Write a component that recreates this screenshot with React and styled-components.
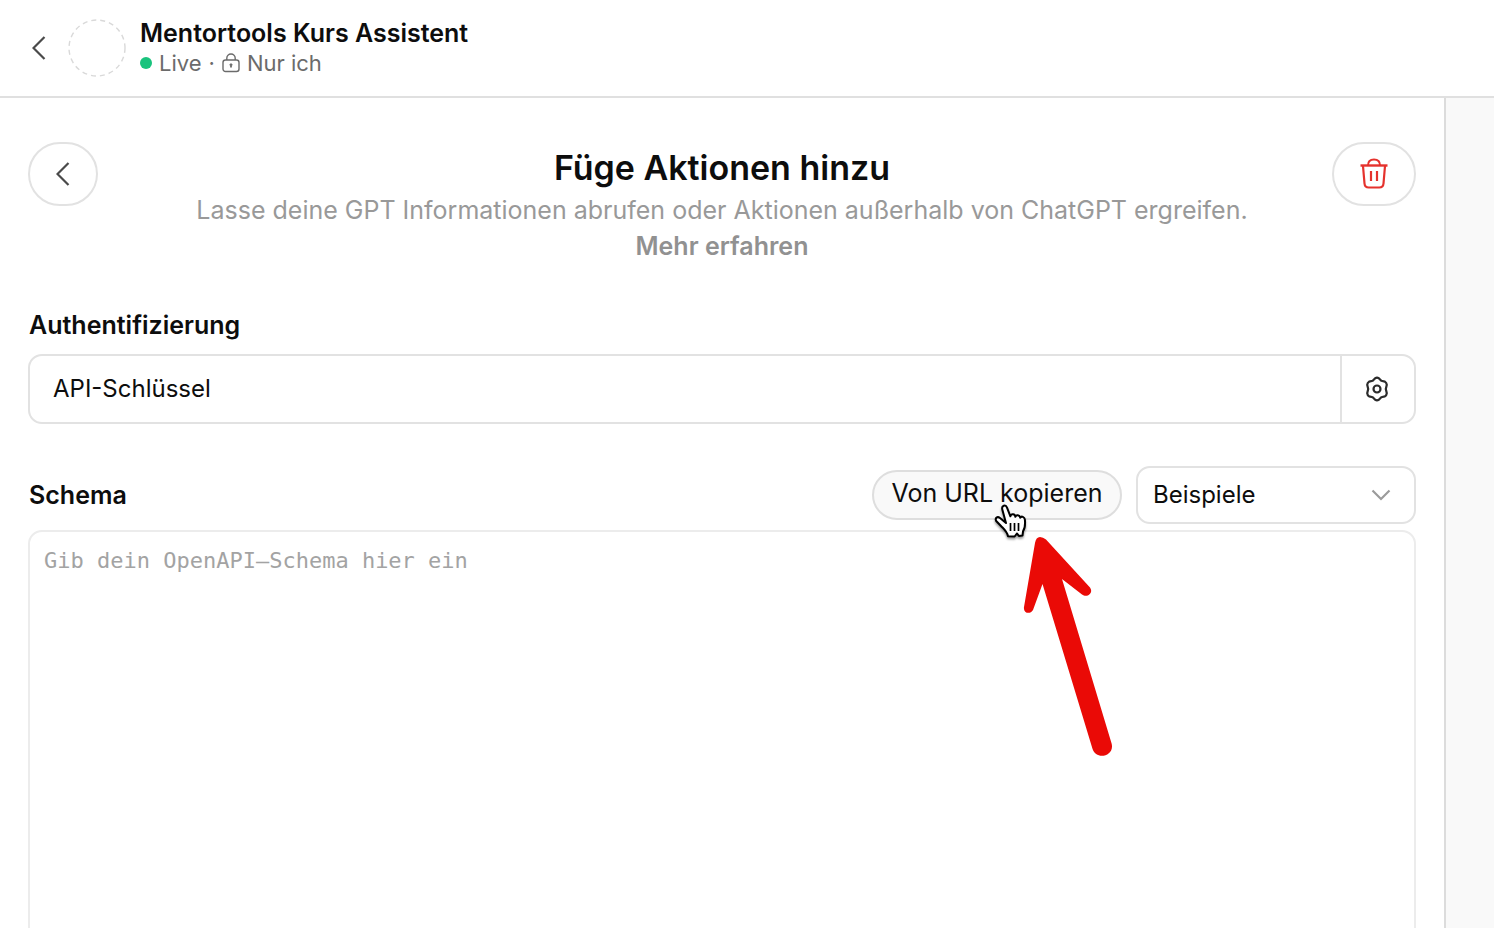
import React from 'react'
import styled, { createGlobalStyle } from 'styled-components'

const GlobalStyle = createGlobalStyle`
  * {
    box-sizing: border-box;
  }

  body {
    margin: 0;
    background: white;
    color: #0d0d0d;
    font-family: Inter, 'Liberation Sans', sans-serif;
    font-size: 24px;
    line-height: 36px;
  }

  button,
  input,
  select,
  textarea {
    margin: 0;
    color: inherit;
    font: inherit;
  }
`

const ChevronLeft = () => (
  <svg width="14" height="24" viewBox="0 0 14 24" fill="none">
    <path d="M12.5 1L1.5 12L12.5 23" stroke="#4a4a4a" strokeWidth="2.2" />
  </svg>
)

const Lock = () => (
  <svg width="18" height="20" viewBox="0 0 18 20" fill="none" stroke="#6b6b6b">
    <rect x="1" y="7" width="16" height="11.5" rx="2.5" strokeWidth="1.4" />
    <path d="M4.8 7V5.2a4.2 4.2 0 0 1 8.4 0V7" strokeWidth="1.4" />
    <path d="M9 10.5v4" strokeWidth="1.8" />
    <path d="M7.4 11.8h3.2" strokeWidth="1" />
  </svg>
)

const Trash = () => (
  <svg width="28" height="32" viewBox="0 0 28 32" fill="none" stroke="#e5322d">
    <path d="M0.5 7.5h27" strokeWidth="2.4" />
    <path d="M8 7.5C8 3.5 10.5 1.5 14 1.5S20 3.5 20 7.5" strokeWidth="2" />
    <path
      d="M3 8l1.5 17.5c.2 2.6 1.6 4 4.2 4h10.6c2.6 0 4-1.4 4.2-4L25 8"
      strokeWidth="2.2"
    />
    <path d="M11 13v10M17 13v10" strokeWidth="2.2" />
  </svg>
)

const Gear = () => (
  <svg width="26" height="26" viewBox="0 0 26 26" fill="none" stroke="#2b2b2b">
    <path
      d="M11.2 2.2Q13 1.200 14.800 2.200L17.300 4.800L20.900 5.600Q22.600 6.600 22.800 8.800L21.800 13L22.800 17.200Q22.600 19.400 20.900 20.400L17.300 21.200L14.800 23.800Q13 24.800 11.200 23.800L8.700 21.200L5.100 20.400Q3.400 19.400 3.200 17.200L4.200 13L3.200 8.800Q3.400 6.600 5.100 5.600L8.700 4.800Z"
      strokeWidth="2.2"
      strokeLinejoin="round"
    />
    <circle cx="13" cy="13" r="3.5" strokeWidth="2.2" />
  </svg>
)

const ChevronDown = () => (
  <svg width="20" height="12" viewBox="0 0 20 12" fill="none">
    <path d="M1.5 1.5L10 10l8.5-8.5" stroke="#9b9b9b" strokeWidth="2.2" />
  </svg>
)

const HandCursor = () => (
  <svg width="34" height="38" viewBox="0 0 34 38">
    <path
      d="M12 21L8.3 7.5C7.3 3.6 11.6 2 13 5.7l3.4 8.6c.7-3 4.6-2.6 5 .5.7-2.4 4.3-2 4.8.9 1.2-2 4.4-1 4.7 2 .4 4.5.4 8.3-1.8 11.3l-.6 4.5-3.6.4-2-2.4-2.3 3-6.600-.3c-1-4.8-4.2-7.2-7-10.2L2.2 19c-1.5-3 1.2-5 3.8-3z"
      fill="white"
      stroke="black"
      strokeWidth="2"
      strokeLinejoin="round"
    />
    <path d="M16.5 21v8M20.5 21v8M24.5 21v8" stroke="black" strokeWidth="1.7" />
  </svg>
)

const Arrow = () => (
  <svg width="96" height="226" viewBox="1020 534 96 226">
    <path
      d="M1035 543Q1036 537 1040 537Q1043 537 1046 539.5L1090 587.5C1094 593 1087 598.5 1082 594.5L1062 579L1111.6 743.5C1115 756 1096 761 1092.4 748.5L1042.5 584L1033 610C1030 615 1023 613 1024 607Z"
      fill="#ea0a06"
    />
  </svg>
)

const App = () => (
  <Page>
    <GlobalStyle />
    <Header>
      <BackButton aria-label="Zurück">
        <ChevronLeft />
      </BackButton>
      <Avatar viewBox="0 0 58 58">
        <circle cx="29" cy="29" r="28" />
      </Avatar>
      <div>
        <Name>Mentortools Kurs Assistent</Name>
        <Status>
          <Dot />
          <span>Live</span>
          <span>·</span>
          <Lock />
          <span>Nur ich</span>
        </Status>
      </div>
    </Header>
    <Body>
      <Panel>
        <Intro>
          <PillButton $width={70} aria-label="Zurück">
            <ChevronLeft />
          </PillButton>
          <IntroText>
            <Title>Füge Aktionen hinzu</Title>
            <Description>
              Lasse deine GPT Informationen abrufen oder Aktionen außerhalb von
              ChatGPT ergreifen.
            </Description>
            <More href="#mehr">Mehr erfahren</More>
          </IntroText>
          <PillButton $width={84} aria-label="Löschen">
            <Trash />
          </PillButton>
        </Intro>

        <Label htmlFor="auth">Authentifizierung</Label>
        <AuthField>
          <AuthInput id="auth" defaultValue="API-Schlüssel" readOnly />
          <GearButton aria-label="Einstellungen">
            <Gear />
          </GearButton>
        </AuthField>

        <SchemaBar>
          <Label htmlFor="schema">Schema</Label>
          <Tools>
            <CopyWrap>
              <CopyButton>Von URL kopieren</CopyButton>
              <CursorLayer>
                <HandCursor />
              </CursorLayer>
              <ArrowLayer>
                <Arrow />
              </ArrowLayer>
            </CopyWrap>
            <SelectWrap>
              <Select aria-label="Beispiele">
                <option>Beispiele</option>
              </Select>
              <SelectIcon>
                <ChevronDown />
              </SelectIcon>
            </SelectWrap>
          </Tools>
        </SchemaBar>
        <SchemaInput id="schema" placeholder="Gib dein OpenAPI–Schema hier ein" />
      </Panel>
      <Preview />
    </Body>
  </Page>
)

const Page = styled.div`
  display: flex;
  flex-direction: column;
  height: 100vh;
  overflow: hidden;
`

const Header = styled.header`
  display: flex;
  flex: none;
  align-items: center;
  padding: 18px 28px;
  border-bottom: 2px solid #e0e0e0;
`

const BackButton = styled.button`
  display: flex;
  padding: 4px;
  border: 0;
  background: none;
`

const Avatar = styled.svg`
  width: 58px;
  height: 58px;
  margin: 0 14px 0 18px;
  fill: none;
  stroke: #d9d9d9;
  stroke-width: 1.4;
  stroke-dasharray: 5 4;
`

const Name = styled.h1`
  margin: 0;
  font-size: 25px;
  font-weight: 600;
  line-height: 30px;
`

const Status = styled.div`
  display: flex;
  align-items: center;
  gap: 7px;
  color: #6b6b6b;
  font-size: 22px;
  line-height: 30px;
`

const Dot = styled.i`
  width: 12px;
  height: 12px;
  border-radius: 50%;
  background: #19c37d;
`

const Body = styled.div`
  display: flex;
  flex: 1;
  min-height: 0;
`

const Panel = styled.main`
  flex: 1;
  min-width: 0;
  padding: 44px 28px 0;
  overflow: hidden;
`

const Preview = styled.aside`
  flex: none;
  width: 50px;
  border-left: 2px solid #dcdcdc;
  background: #f9f9f9;
`

const Intro = styled.div`
  display: grid;
  grid-template-columns: 84px 1fr 84px;
  align-items: start;
  margin-bottom: 43px;
`

const PillButton = styled.button`
  display: flex;
  align-items: center;
  justify-content: center;
  width: ${props => props.$width}px;
  height: 64px;
  padding: 0;
  border: 2px solid #e2e2e2;
  border-radius: 32px;
  background: white;
`

const IntroText = styled.div`
  padding-top: 4px;
  font-size: 25px;
  text-align: center;
`

const Title = styled.h2`
  margin: 0 0 2px;
  font-size: 34px;
  font-weight: 600;
  line-height: 44px;
`

const Description = styled.p`
  margin: 0;
  color: #999;
`

const More = styled.a`
  display: block;
  color: #919191;
  font-weight: 600;
  text-decoration: none;
`

const Label = styled.label`
  padding-left: 1px;
  font-size: 25px;
  font-weight: 600;
`

const AuthField = styled.div`
  display: flex;
  height: 70px;
  margin: 10px 0 42px;
  overflow: hidden;
  border: 2px solid #e2e2e2;
  border-radius: 14px;
`

const AuthInput = styled.input`
  flex: 1;
  min-width: 0;
  padding: 0 23px;
  border: 0;
  background: none;
  outline: none;
`

const GearButton = styled.button`
  display: flex;
  align-items: center;
  justify-content: center;
  width: 74px;
  padding: 0 2px 0 0;
  border: 0;
  border-left: 2px solid #e2e2e2;
  background: none;
`

const SchemaBar = styled.div`
  display: flex;
  align-items: center;
  justify-content: space-between;
  margin-bottom: 6px;
`

const Tools = styled.div`
  display: flex;
  align-items: center;
  gap: 14px;
`

const CopyWrap = styled.div`
  position: relative;
`

const CopyButton = styled.button`
  display: block;
  width: 250px;
  height: 50px;
  padding: 0 0 4px;
  border: 2px solid #dedede;
  border-radius: 25px;
  background: #f9f9f9;
  font-size: 25px;
`

const CursorLayer = styled.div`
  position: absolute;
  top: 32px;
  left: 122px;
  z-index: 1;
  line-height: 0;
  pointer-events: none;
  filter: drop-shadow(0 2px 1px rgba(0, 0, 0, 0.4));
`

const ArrowLayer = styled.div`
  position: absolute;
  top: 64px;
  left: 148px;
  z-index: 1;
  line-height: 0;
  pointer-events: none;
`

const SelectWrap = styled.div`
  position: relative;
`

const Select = styled.select`
  display: block;
  width: 280px;
  height: 58px;
  padding: 0 15px;
  appearance: none;
  border: 2px solid #e2e2e2;
  border-radius: 14px;
  background: white;
`

const SelectIcon = styled.span`
  position: absolute;
  top: 23px;
  right: 25px;
  line-height: 0;
  pointer-events: none;
`

const SchemaInput = styled.textarea`
  display: block;
  width: 100%;
  height: 640px;
  padding: 11px 14px;
  border: 2px solid #ececec;
  border-radius: 14px;
  outline: none;
  resize: none;
  font-family: 'DejaVu Sans Mono', monospace;
  font-size: 22px;

  &::placeholder {
    color: #a3a3a3;
    opacity: 1;
  }
`

export default App
